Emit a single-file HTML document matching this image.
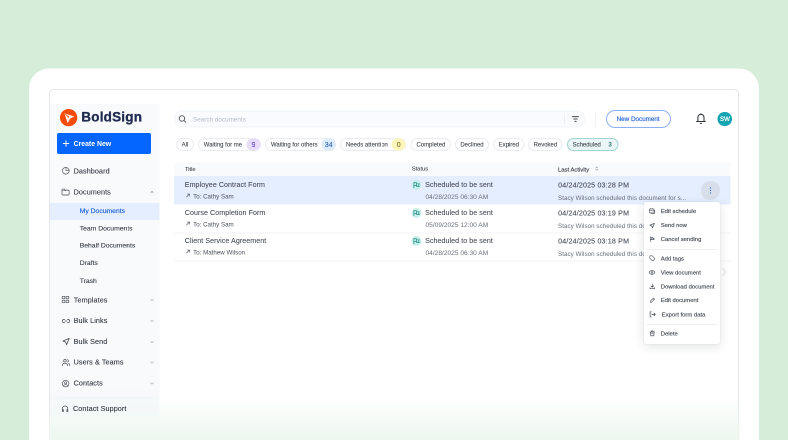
<!DOCTYPE html>
<html lang="en">
<head>
<meta charset="utf-8">
<title>BoldSign - My Documents</title>
<style>
*{box-sizing:border-box;margin:0;padding:0}
html,body{width:788px;height:440px;overflow:hidden}
body{background:#d6edda;font-family:"Liberation Sans",sans-serif;color:#333b47;position:relative;-webkit-font-smoothing:antialiased}
.abs{position:absolute}
.card{position:absolute;left:58px;top:137.4px;width:1460px;height:800px;background:#fff;border-radius:40px 40px 0 0}
.app{position:absolute;left:98px;top:178px;width:1380px;height:760px;border:2px solid #e4e6ea;border-radius:9px;background:#fff}
.side{position:absolute;left:100px;top:208px;width:219.2px;height:626.4px;background:linear-gradient(to bottom,#f8fafc 0,#f8fafc 570px,#f3f8f8 100%)}
.t{position:absolute;white-space:nowrap;line-height:1;transform:translateY(-50%)}
.logo-t{font-weight:700;font-size:27px;color:#222c50;letter-spacing:.4px;-webkit-text-stroke:.6px #222c50}
.btn-create{position:absolute;left:114px;top:266px;width:188px;height:42px;background:#0565ff;border-radius:4px}
.nav{font-size:14.4px;color:#363b44;font-weight:400;-webkit-text-stroke:.24px #363b44;letter-spacing:.2px}
.sub{font-size:13.6px;color:#363b44;-webkit-text-stroke:.2px #363b44}
.ic{position:absolute;fill:none;stroke:#454a52;stroke-width:1.6;stroke-linecap:round;stroke-linejoin:round}
.chev{position:absolute;fill:none;stroke:#9da1a9;stroke-width:1.5;stroke-linecap:round;stroke-linejoin:round}
.search{position:absolute;left:348px;top:221px;width:822px;height:34.4px;border-radius:18px;background:#f9fbfe;border:2px solid #f2f5f9}
.chip{position:absolute;top:276px;height:26px;border:2px solid #eaecef;border-radius:14px;background:#fff;font-size:11.96px;color:#434850;line-height:23.2px;white-space:nowrap;padding-left:9.6px;-webkit-text-stroke:.2px #434850}
.chip.c{padding-left:0;text-align:center}
.badge{position:absolute;top:-1px;right:-1px;height:24px;border-radius:12px;text-align:center;line-height:24.4px;font-size:14px;font-weight:400;-webkit-text-stroke:.14px currentColor;letter-spacing:0}
.th{font-size:11.4px;color:#3a3f47;-webkit-text-stroke:.16px #3a3f47}
.title{font-size:14.2px;color:#444953;-webkit-text-stroke:.12px #444953;letter-spacing:.12px}
.small{font-size:12.4px;color:#4d525c}
.gray{font-size:12.4px;color:#6c717b}
.mi{font-size:11.8px;color:#454a54;-webkit-text-stroke:.28px #454a54}
.mic{position:absolute;fill:none;stroke:#41464f;stroke-width:1.7;stroke-linecap:round;stroke-linejoin:round}
.sic{position:absolute}
</style>
</head>
<body>
<div id="root" style="position:absolute;left:0;top:0;width:1576px;height:880px;overflow:hidden;transform:scale(.5);transform-origin:0 0;will-change:transform">
<div class="card"></div>
<div class="app"></div>

<!-- sidebar -->
<div class="abs" style="left:98px;top:796px;width:1381px;height:84px;background:linear-gradient(to bottom,rgba(238,247,240,0) 0%,rgba(238,247,240,.5) 45%,rgba(238,247,240,1) 100%)"></div>
<div class="side"></div>
<svg class="abs" style="left:120px;top:218.2px" width="34.6" height="34.6" viewBox="0 0 24 24"><circle cx="12" cy="12" r="12" fill="#f74c09"/><path d="M6.200 6 L20 10.400 L14 13.400 L10.600 19.800 Z" fill="#fff8f0"/><path d="M7.500 7.200 L11.400 10.800" stroke="#f74c09" stroke-width="1" fill="none"/><circle cx="11.500" cy="10.900" r="1.200" fill="#f0622a"/></svg>
<div class="t logo-t" style="left:162.6px;top:234.2px">BoldSign</div>
<div class="btn-create"></div>
<svg class="abs" style="left:125px;top:280px" width="14" height="14" viewBox="0 0 14 14"><path d="M7 1.5v11M1.5 7h11" stroke="#fff" stroke-width="1.9" stroke-linecap="round"/></svg>
<div class="t" style="left:147.2px;top:287.8px;font-size:13.8px;font-weight:700;color:#fff">Create New</div>

<svg class="ic" style="left:123px;top:333px" width="17.2" height="17.2" viewBox="0 0 24 24"><circle cx="12" cy="12" r="9.300" stroke-width="1.900"/><path d="M12.600 3v8.400H21" stroke-width="1.700"/></svg>
<div class="t nav" style="left:147.2px;top:342.4px">Dashboard</div>
<svg class="ic" style="left:122.4px;top:375.1px" width="18.2" height="18.2" viewBox="0 0 24 24"><path d="M2.600 6.200a2 2 0 0 1 2-2h4.200l2.200 2.800h8.400a2 2 0 0 1 2 2v8.800a2 2 0 0 1-2 2H4.600a2 2 0 0 1-2-2z" stroke-width="1.800"/><path d="M2.600 8.800h9" stroke-width="1.600"/></svg>
<div class="t nav" style="left:147.2px;top:384.2px">Documents</div>
<svg class="chev" style="left:300px;top:380.8px" width="8" height="6.4" viewBox="0 0 10 8"><path d="M1.5 6 5 2.5 8.5 6"/></svg>

<div class="abs" style="left:100px;top:406px;width:219.2px;height:34.4px;background:#e5eefe"></div>
<div class="t sub" style="left:159.4px;top:421.8px;color:#1c62d8;-webkit-text-stroke:.3px #1c62d8">My Documents</div>
<div class="t sub" style="left:159.4px;top:457.2px">Team Documents</div>
<div class="t sub" style="left:159.4px;top:491.2px">Behalf Documents</div>
<div class="t sub" style="left:159.4px;top:526px">Drafts</div>
<div class="t sub" style="left:159.4px;top:561.8px">Trash</div>

<svg class="ic" style="left:123.2px;top:591px" width="16" height="16" viewBox="0 0 24 24"><rect x="2" y="2.600" width="8.200" height="7.400" rx="1" stroke-width="1.900"/><rect x="13.800" y="2.600" width="8.200" height="7.400" rx="1" stroke-width="1.900"/><rect x="2" y="14" width="8.200" height="7.400" rx="1" stroke-width="1.900"/><rect x="13.800" y="14" width="8.200" height="7.400" rx="1" stroke-width="1.900"/></svg>
<div class="t nav" style="left:147.6px;top:599.6px">Templates</div>
<svg class="chev" style="left:300px;top:597.2px" width="8" height="6.4" viewBox="0 0 10 8"><path d="M1.5 2 5 5.5 8.5 2"/></svg>

<svg class="ic" style="left:122.6px;top:632.6px" width="18.2" height="18.2" viewBox="0 0 24 24"><path d="M8.400 7.600H6.800a4.400 4.400 0 0 0 0 8.800h1.600M15.600 7.600h1.600a4.400 4.400 0 0 1 0 8.800h-1.600M9.200 12h5.600" stroke-width="1.900"/></svg>
<div class="t nav" style="left:147.2px;top:641.2px">Bulk Links</div>
<svg class="chev" style="left:300px;top:638.8px" width="8" height="6.4" viewBox="0 0 10 8"><path d="M1.5 2 5 5.5 8.5 2"/></svg>

<svg class="ic" style="left:123.7px;top:675.1px" width="16.2" height="16.2" viewBox="0 0 24 24"><path d="M21.400 2.600 2.800 10.400l7.800 3 3 7.800z" stroke-width="2.400"/></svg>
<div class="t nav" style="left:147.2px;top:683.2px">Bulk Send</div>
<svg class="chev" style="left:300px;top:680.8px" width="8" height="6.4" viewBox="0 0 10 8"><path d="M1.5 2 5 5.5 8.5 2"/></svg>

<svg class="ic" style="left:122.6px;top:716.2px" width="18.2" height="18.2" viewBox="0 0 24 24"><circle cx="9.200" cy="7.400" r="3.400" stroke-width="1.800"/><path d="M2.400 20.600v-1.800a4.800 4.800 0 0 1 4.800-4.800h4a4.800 4.800 0 0 1 4.800 4.800v1.800M16 4.200a3.400 3.400 0 0 1 0 6.400M18.800 14.200a4.800 4.800 0 0 1 3 4.600v1.800" stroke-width="1.800"/></svg>
<div class="t nav" style="left:147.2px;top:724.2px">Users &amp; Teams</div>
<svg class="chev" style="left:300px;top:722px" width="8" height="6.4" viewBox="0 0 10 8"><path d="M1.5 2 5 5.5 8.5 2"/></svg>

<svg class="ic" style="left:123.4px;top:758.5px" width="16.6" height="16.6" viewBox="0 0 24 24"><circle cx="12" cy="12" r="9.600" stroke-width="1.900"/><circle cx="12" cy="9.600" r="3.100" stroke-width="1.700"/><path d="M5.800 18.800c1.200-2.800 3.400-4 6.200-4s5 1.200 6.200 4" stroke-width="1.700"/></svg>
<div class="t nav" style="left:147.2px;top:766.2px">Contacts</div>
<svg class="chev" style="left:300px;top:763.6px" width="8" height="6.4" viewBox="0 0 10 8"><path d="M1.5 2 5 5.5 8.5 2"/></svg>

<div class="abs" style="left:114px;top:795px;width:192px;height:2px;background:#eff2f5"></div>
<svg class="ic" style="left:121.8px;top:809.4px" width="16.4" height="16.4" viewBox="0 0 24 24"><path d="M4.200 19.500v-7.300a7.800 7.800 0 0 1 15.600 0v7.300" stroke-width="2"/><path d="M4.200 15h2.600v5.600H4.200zM17.200 15h2.600v5.600h-2.600z" stroke-width="2"/></svg>
<div class="t nav" style="left:146px;top:816.8px">Contact Support</div>

<!-- top bar -->
<div class="search"></div>
<svg class="abs" style="left:355.8px;top:229.4px" width="18" height="18" viewBox="0 0 24 24" fill="none" stroke="#4b5058" stroke-width="2.3" stroke-linecap="round"><circle cx="10.500" cy="10.500" r="7.300"/><path d="M16 16l4.800 4.800"/></svg>
<div class="t" style="left:386px;top:238.8px;font-size:12.7px;color:#b5bbc6">Search documents</div>
<div class="abs" style="left:1128.4px;top:227px;width:2px;height:22px;background:#eef0f4"></div>
<svg class="abs" style="left:1142.6px;top:230.4px" width="16" height="16" viewBox="0 0 16 16" fill="none" stroke="#41464e" stroke-width="1.900" stroke-linecap="round"><path d="M2 3.200h12M4.500 8h7M6.700 12.800h2.600"/></svg>
<div class="abs" style="left:1190px;top:224px;width:2px;height:28px;background:#f0f2f5"></div>
<div class="abs" style="left:1212px;top:220.4px;width:130px;height:35.2px;border:2px solid #8eb0f3;border-radius:18px;background:#fff"></div>
<div class="t" style="left:1233.2px;top:237.8px;font-size:12.6px;color:#3470dc;-webkit-text-stroke:.4px #3470dc">New Document</div>
<svg class="abs" style="left:1391.4px;top:226.4px" width="22" height="24" viewBox="0 0 22 24" fill="none" stroke="#2e3238" stroke-width="2.1" stroke-linecap="round" stroke-linejoin="round"><path d="M10.900 2.800a6.100 6.100 0 0 0-6.100 6.100v8.100h12.200V8.900a6.100 6.100 0 0 0-6.100-6.100z"/><path d="M2.200 17h17.400M9.700 20.800h2.400M10.900 1.600v1"/></svg>
<div class="abs" style="left:1435.4px;top:223.5px;width:28.6px;height:28.6px;border-radius:50%;background:#14a4b1"></div>
<div class="t" style="left:1440px;top:238px;font-size:12px;color:#fff;font-weight:400;-webkit-text-stroke:.44px #fff;letter-spacing:.2px">SW</div>

<!-- chips -->
<div class="chip c" style="left:352.4px;width:35.2px">All</div>
<div class="chip" style="left:396px;width:125.6px">Waiting for me<span class="badge" style="width:27.6px;background:#e8dcfb;color:#5f3dc4">9</span></div>
<div class="chip" style="left:530.4px;width:142px">Waiting for others<span class="badge" style="width:28px;background:#dcecfc;color:#2a66b8">34</span></div>
<div class="chip" style="left:680.4px;width:132px">Needs attention<span class="badge" style="width:28px;background:#fdf6bc;color:#6f5f10">0</span></div>
<div class="chip c" style="left:821.2px;width:81.2px">Completed</div>
<div class="chip c" style="left:910px;width:68px">Declined</div>
<div class="chip c" style="left:986px;width:63.2px">Expired</div>
<div class="chip c" style="left:1056.4px;width:68.8px">Revoked</div>
<div class="chip" style="left:1133.6px;width:103.6px;background:#eaf7f6;border-color:#9fd5d0">Scheduled<span class="abs" style="right:11.6px;top:0;font-weight:700;font-size:12.4px;-webkit-text-stroke:0;color:#2f6f6c">3</span></div>

<!-- table -->
<div class="abs" style="left:348px;top:324.8px;width:1113.2px;height:28px;background:#f9fafc"></div>
<div class="t th" style="left:370px;top:338.7px">Title</div>
<div class="t th" style="left:823.8px;top:338.1px">Status</div>
<div class="t th" style="left:1116px;top:339.8px;font-size:11.8px;-webkit-text-stroke:.28px #3a3f47">Last Activity</div>
<svg class="abs" style="left:1189.6px;top:332.2px" width="7.2" height="10.4" viewBox="0 0 8 11" fill="none" stroke="#8d929c" stroke-width="1.200" stroke-linecap="round" stroke-linejoin="round"><path d="M1.600 4.200 4 1.600 6.400 4.200M1.600 6.800 4 9.400 6.400 6.800"/></svg>

<div class="abs" style="left:348px;top:352px;width:1113.2px;height:57.4px;background:#e5eefe"></div>
<div class="abs" style="left:348px;top:464.8px;width:1114px;height:2px;background:#f3f4f7"></div>
<div class="abs" style="left:348px;top:520.8px;width:1114px;height:2px;background:#f3f4f7"></div>

<!-- row 1 -->
<div class="t title" style="left:369.6px;top:369.4px">Employee Contract Form</div>
<svg class="abs" style="left:370.8px;top:385.8px" width="10" height="10" viewBox="0 0 10 10" fill="none" stroke="#4b505b" stroke-width="1.150" stroke-linecap="round" stroke-linejoin="round"><path d="M2 8 8 2M3.5 2H8v4.500"/></svg>
<div class="t small" style="left:386.2px;top:393.2px">To: Cathy Sam</div>
<svg class="sic" style="left:823px;top:359.6px" width="20" height="20" viewBox="0 0 20 20"><circle cx="10" cy="10" r="10" fill="#c9f0ec"/><path d="M4.800 4.500v11.500M4.800 5.500h5.400v5.700H4.800M10.200 7.600h5.600l-1.800 2.800 1.800 2.800h-5.600v-2" fill="none" stroke="#1f8f84" stroke-width="1.400" stroke-linejoin="round" stroke-linecap="round"/></svg>
<div class="t title" style="left:850.2px;top:369px">Scheduled to be sent</div>
<div class="t gray" style="left:851px;font-size:13.2px;top:394px">04/28/2025 06:30 AM</div>
<div class="t title" style="left:1116.2px;top:370.4px;letter-spacing:.34px;-webkit-text-stroke:.16px #444953">04/24/2025 03:28 PM</div>
<div class="t gray" style="left:1116px;top:395.6px;letter-spacing:.14px;color:#686e79">Stacy Wilson scheduled this document for s...</div>

<!-- row 2 -->
<div class="t title" style="left:369.6px;top:425.4px">Course Completion Form</div>
<svg class="abs" style="left:370.8px;top:441.8px" width="10" height="10" viewBox="0 0 10 10" fill="none" stroke="#4b505b" stroke-width="1.150" stroke-linecap="round" stroke-linejoin="round"><path d="M2 8 8 2M3.5 2H8v4.500"/></svg>
<div class="t small" style="left:386.2px;top:449.2px">To: Cathy Sam</div>
<svg class="sic" style="left:823px;top:415.6px" width="20" height="20" viewBox="0 0 20 20"><circle cx="10" cy="10" r="10" fill="#c9f0ec"/><path d="M4.800 4.500v11.500M4.800 5.500h5.400v5.700H4.800M10.200 7.600h5.600l-1.800 2.800 1.800 2.800h-5.600v-2" fill="none" stroke="#1f8f84" stroke-width="1.400" stroke-linejoin="round" stroke-linecap="round"/></svg>
<div class="t title" style="left:850.2px;top:425px">Scheduled to be sent</div>
<div class="t gray" style="left:851px;font-size:13.2px;top:450px">05/09/2025 12:00 AM</div>
<div class="t title" style="left:1116.2px;top:426.4px;letter-spacing:.34px;-webkit-text-stroke:.16px #444953">04/24/2025 03:19 PM</div>
<div class="t gray" style="left:1116px;top:451.6px;letter-spacing:.14px;color:#686e79">Stacy Wilson scheduled this document for s...</div>

<!-- row 3 -->
<div class="t title" style="left:369.6px;top:481.4px">Client Service Agreement</div>
<svg class="abs" style="left:370.8px;top:497.8px" width="10" height="10" viewBox="0 0 10 10" fill="none" stroke="#4b505b" stroke-width="1.150" stroke-linecap="round" stroke-linejoin="round"><path d="M2 8 8 2M3.5 2H8v4.500"/></svg>
<div class="t small" style="left:386.2px;top:505.2px">To: Mathew Wilson</div>
<svg class="sic" style="left:823px;top:471.6px" width="20" height="20" viewBox="0 0 20 20"><circle cx="10" cy="10" r="10" fill="#c9f0ec"/><path d="M4.800 4.500v11.500M4.800 5.500h5.400v5.700H4.800M10.200 7.600h5.600l-1.800 2.800 1.800 2.800h-5.600v-2" fill="none" stroke="#1f8f84" stroke-width="1.400" stroke-linejoin="round" stroke-linecap="round"/></svg>
<div class="t title" style="left:850.2px;top:481px">Scheduled to be sent</div>
<div class="t gray" style="left:851px;font-size:13.2px;top:506px">04/28/2025 06:30 AM</div>
<div class="t title" style="left:1116.2px;top:482.4px;letter-spacing:.34px;-webkit-text-stroke:.16px #444953">04/24/2025 03:18 PM</div>
<div class="t gray" style="left:1116px;top:507.6px;letter-spacing:.14px;color:#686e79">Stacy Wilson scheduled this document for s...</div>

<!-- action button -->
<div class="abs" style="left:1402.2px;top:362px;width:37.6px;height:37.6px;border-radius:50%;background:#d8dfeb"></div>
<svg class="abs" style="left:1419px;top:373.8px" width="4" height="14" viewBox="0 0 4 14"><circle cx="2" cy="2" r="1.300" fill="#3a70d4"/><circle cx="2" cy="7" r="1.300" fill="#3a70d4"/><circle cx="2" cy="12" r="1.300" fill="#3a70d4"/></svg>
<svg class="abs" style="left:1443.2px;top:535.2px" width="10" height="18" viewBox="0 0 10 18" fill="none" stroke="#d9dde5" stroke-width="1.500" stroke-linecap="round" stroke-linejoin="round"><path d="M2.500 2 8 9l-5.500 7"/></svg>

<!-- menu -->
<div class="abs" style="left:1288px;top:403.6px;width:152px;height:284px;background:#fff;border-radius:5px;box-shadow:0 5px 20px rgba(30,35,45,.13),0 0 3px rgba(30,35,45,.1)"></div>
<div class="abs" style="left:1293.2px;top:497.6px;width:140.8px;height:2px;background:#edeff2"></div>
<div class="abs" style="left:1293.2px;top:647.6px;width:140.8px;height:2px;background:#edeff2"></div>

<svg class="mic" style="left:1297.2px;top:415.4px" width="14" height="14" viewBox="0 0 24 24"><rect x="3" y="5" width="16" height="13.500" rx="2.200" stroke-width="2"/><path d="M3 9.500h16M7.500 3v3M14.500 3v3M21.500 10v9a2 2 0 0 1-2 2H9" stroke-width="1.800"/></svg>
<div class="t mi" style="left:1321.4px;top:422.6px">Edit schedule</div>
<svg class="mic" style="left:1298.4px;top:444.6px" width="12.4" height="12.4" viewBox="0 0 24 24"><path d="M21 3 3 10.500l7.500 3 3 7.500z" stroke-width="2.700"/></svg>
<div class="t mi" style="left:1321.4px;top:450.8px">Send now</div>
<svg class="mic" style="left:1297.6px;top:471.6px" width="13.2" height="13.2" viewBox="0 0 24 24"><path d="M5 3v18M5 5h7l1.500 2.500H10M10 7.500v6H5M10 13.500h9l-2.500-3 2.500-3h-5" stroke-width="2.0"/></svg>
<div class="t mi" style="left:1321.4px;top:479.2px">Cancel sending</div>
<svg class="mic" style="left:1297.6px;top:510.4px" width="13.2" height="13.2" viewBox="0 0 24 24"><path d="M3 5a2 2 0 0 1 2-2h6.500l9 9a2 2 0 0 1 0 2.800l-5.700 5.700a2 2 0 0 1-2.800 0l-9-9z" stroke-width="2.0"/></svg>
<div class="t mi" style="left:1321.4px;top:518.4px">Add tags</div>
<svg class="mic" style="left:1297.2px;top:538.4px" width="14" height="14" viewBox="0 0 24 24"><path d="M2 12s3.600-6.500 10-6.500S22 12 22 12s-3.600 6.500-10 6.500S2 12 2 12z" stroke-width="2.2"/><circle cx="12" cy="12" r="2.800" stroke-width="2.2"/></svg>
<div class="t mi" style="left:1321.4px;top:546.2px">View document</div>
<svg class="mic" style="left:1297.6px;top:566px" width="13.2" height="13.2" viewBox="0 0 24 24"><path d="M12 3v12M7 10.500l5 5 5-5M3.500 17v3.500h17V17" stroke-width="2.3"/></svg>
<div class="t mi" style="left:1321.4px;top:574px">Download document</div>
<svg class="mic" style="left:1297.6px;top:594px" width="13.2" height="13.2" viewBox="0 0 24 24"><path d="M4 20l1-5L16 4l4 4L9 19z" stroke-width="2.0"/><path d="M13.500 6.500l4 4" stroke-width="1.8"/></svg>
<div class="t mi" style="left:1321.4px;top:601.2px">Edit document</div>
<svg class="mic" style="left:1297.6px;top:622px" width="14" height="13.6" viewBox="0 0 25 24"><path d="M8 3H4v18h4M10 12h12M18 7.500l4.500 4.500-4.500 4.500" stroke-width="2.400"/></svg>
<div class="t mi" style="left:1323.6px;top:630px">Export form data</div>
<svg class="mic" style="left:1297.6px;top:660.4px" width="13.2" height="13.6" viewBox="0 0 24 25"><path d="M3.500 7h17M9 7V3.500h6V7M5.500 7l1 14.500h11l1-14.500M9.500 12h5" stroke-width="2.400"/></svg>
<div class="t mi" style="left:1321.4px;top:667.8px">Delete</div>

<!-- bottom fade -->
</div>
</body>
</html>
